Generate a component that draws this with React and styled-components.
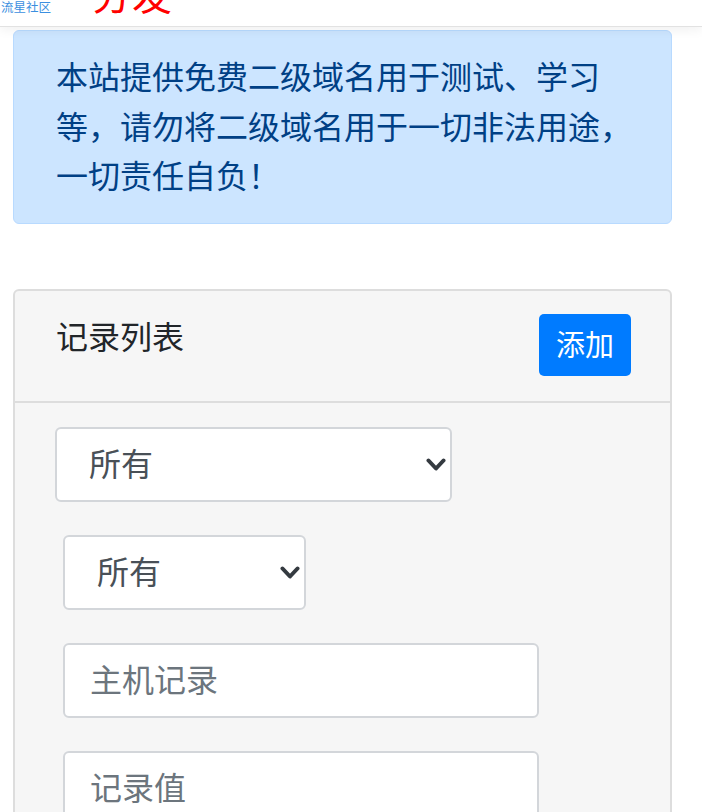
import React from 'react';
import styled, { createGlobalStyle } from 'styled-components';

const GlobalStyle = createGlobalStyle`
	body {
		margin: 0;
		background: #fff;
		font-family: "Noto Sans CJK SC", "Noto Sans", sans-serif;
	}
`;

const Chevron = () => (
	<ChevronIcon width="20" height="14" viewBox="0 0 20 14">
		<path d="M2.5 2.5 L10 10.5 L17.5 2.5" fill="none" stroke="#343a40" strokeWidth="4" strokeLinecap="round" strokeLinejoin="round" />
	</ChevronIcon>
);

const Select = ({ width, offset, padLeft }) => (
	<SelectWrap $width={width} $offset={offset}>
		<SelectBox $padLeft={padLeft} defaultValue="all">
			<option value="all">所有</option>
		</SelectBox>
		<Chevron />
	</SelectWrap>
);

export default function App() {
	return (
		<>
			<GlobalStyle />
			<Header>
				<SiteName>流星社区</SiteName>
				<PageTitle>分发</PageTitle>
			</Header>

			<Main>
				<Alert>
					本站提供免费二级域名用于测试、学习
					<br />
					等，请勿将二级域名用于一切非法用途，
					<br />
					一切责任自负！
				</Alert>

				<Card>
					<CardHeader>
						<CardTitle>记录列表</CardTitle>
						<AddButton>添加</AddButton>
					</CardHeader>

					<CardBody>
						<Select width="397px" offset="40px" padLeft="32px" />
						<Select width="243px" offset="48px" padLeft="32px" />
						<TextInput placeholder="主机记录" />
						<TextInput placeholder="记录值" />
					</CardBody>
				</Card>
			</Main>
		</>
	);
}

const Header = styled.div`
	height: 26px;
	display: flex;
	align-items: flex-start;
	gap: 41px;
	overflow: hidden;
	background: #fff;
	border-bottom: 1px solid #e2e2e2;
	box-shadow: 0 3px 12px rgba(0, 0, 0, 0.06);
	position: relative;
	z-index: 1;
`;

const SiteName = styled.div`
	font-size: 12.5px;
	line-height: 14px;
	color: #3b8fe0;
	padding-left: 1px;
	white-space: nowrap;
`;

const PageTitle = styled.div`
	font-size: 40px;
	line-height: 40px;
	margin-top: -27px;
	color: #ff0000;
	white-space: nowrap;
`;

const Main = styled.div`
	padding: 3px 30px 0 13px;
	display: flex;
	flex-direction: column;
	gap: 66px;
`;

const Alert = styled.div`
	box-sizing: border-box;
	height: 194px;
	padding: 20px 20px 0 42px;
	background: #cce5ff;
	border: 1.5px solid #b8daff;
	border-radius: 6px;
	color: #004085;
	font-size: 32px;
	line-height: 49.5px;
	white-space: nowrap;
`;

const Card = styled.div`
	background: #f6f6f6;
	border: 2px solid #dddddd;
	border-radius: 6px;
	height: 560px;
	margin-top: -1px;
`;

const CardHeader = styled.div`
	height: 112px;
	box-sizing: border-box;
	padding: 23px 39px 0 41px;
	display: flex;
	justify-content: space-between;
	align-items: flex-start;
	border-bottom: 2px solid #dddddd;
`;

const CardTitle = styled.div`
	font-size: 32px;
	line-height: 42px;
	color: #212529;
`;

const AddButton = styled.button`
	width: 92px;
	height: 62px;
	border: none;
	border-radius: 5px;
	background: #007bff;
	color: #fff;
	font-family: inherit;
	font-size: 29px;
	line-height: 1;
	padding: 0 0 3px;
`;

const CardBody = styled.div`
	padding-top: 24px;
	display: flex;
	flex-direction: column;
	align-items: flex-start;
	gap: 33px;
`;

const SelectWrap = styled.div`
	position: relative;
	width: ${(p) => p.$width};
	margin-left: ${(p) => p.$offset};
`;

const SelectBox = styled.select`
	appearance: none;
	width: 100%;
	height: 75px;
	box-sizing: border-box;
	padding: 0 40px 5px ${(p) => p.$padLeft};
	background: #fff;
	border: 2px solid #d3d6da;
	border-radius: 6px;
	color: #495057;
	font-family: inherit;
	font-size: 32px;
	outline: none;
`;

const ChevronIcon = styled.svg`
	position: absolute;
	right: 6px;
	top: 31px;
	pointer-events: none;
`;

const TextInput = styled.input`
	width: 476px;
	height: 75px;
	box-sizing: border-box;
	margin-left: 48px;
	padding: 0 25px 5px;
	background: #fff;
	border: 2px solid #d3d6da;
	border-radius: 6px;
	color: #495057;
	font-family: inherit;
	font-size: 32px;
	outline: none;

	&::placeholder {
		color: #6c757d;
	}
`;
